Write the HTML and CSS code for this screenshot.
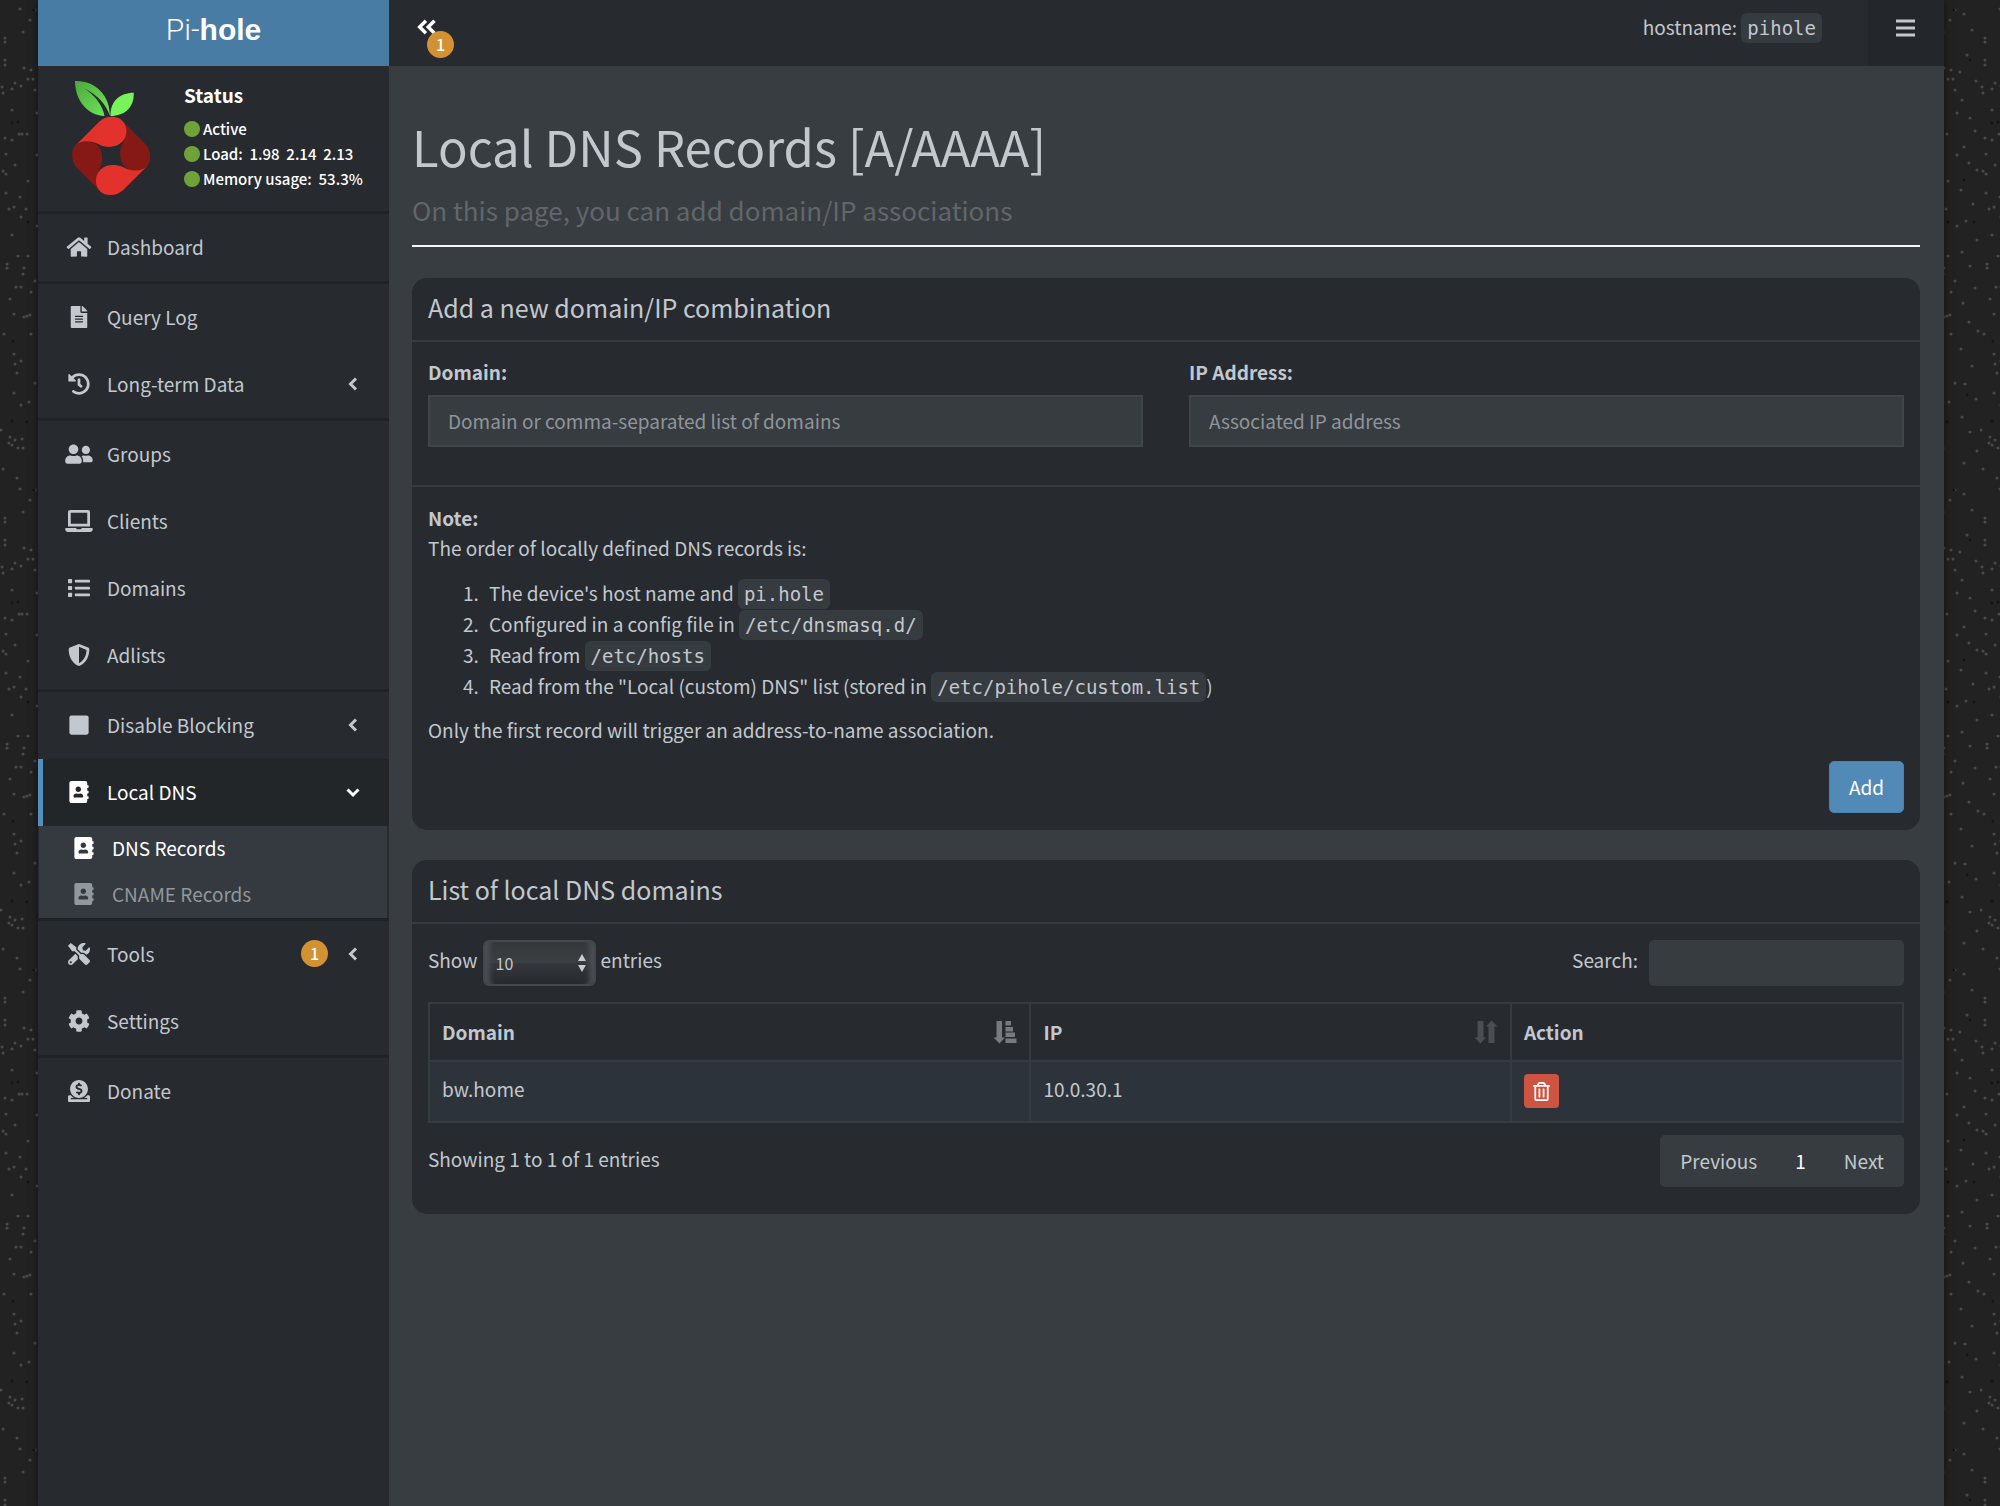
FILE: index.html
```html
<!DOCTYPE html>
<html lang="en">
<head>
<meta charset="utf-8">
<meta name="viewport" content="width=device-width, initial-scale=1">
<title>Pi-hole - Local DNS Records</title>
<link rel="stylesheet" href="styles.css">
</head>
<body>
<svg class="sprite" aria-hidden="true">
  <symbol id="i-home" viewBox="0 0 576 512"><path d="M280.37 148.26L96 300.11V464a16 16 0 0 0 16 16l112.06-.29a16 16 0 0 0 15.92-16V368a16 16 0 0 1 16-16h64a16 16 0 0 1 16 16v95.64a16 16 0 0 0 16 16.05L464 480a16 16 0 0 0 16-16V300L295.67 148.26a12.19 12.19 0 0 0-15.3 0zM571.6 251.47L488 182.56V44.05a12 12 0 0 0-12-12h-56a12 12 0 0 0-12 12v72.61L318.47 43a48 48 0 0 0-61 0L4.34 251.47a12 12 0 0 0-1.6 16.9l25.5 31A12 12 0 0 0 45.15 301l235.22-193.74a12.19 12.19 0 0 1 15.3 0L530.9 301a12 12 0 0 0 16.9-1.6l25.5-31a12 12 0 0 0-1.7-16.93z"/></symbol>
  <symbol id="i-file" viewBox="0 0 384 512"><path d="M224 136V0H24C10.7 0 0 10.7 0 24v464c0 13.3 10.7 24 24 24h336c13.3 0 24-10.7 24-24V160H248c-13.2 0-24-10.8-24-24zm64 236c0 6.6-5.4 12-12 12H108c-6.6 0-12-5.4-12-12v-8c0-6.6 5.4-12 12-12h168c6.6 0 12 5.4 12 12v8zm0-64c0 6.6-5.4 12-12 12H108c-6.6 0-12-5.4-12-12v-8c0-6.6 5.4-12 12-12h168c6.6 0 12 5.4 12 12v8zm0-72v8c0 6.6-5.4 12-12 12H108c-6.6 0-12-5.4-12-12v-8c0-6.6 5.4-12 12-12h168c6.6 0 12 5.4 12 12zm96-114.1v6.1H256V0h6.1c6.4 0 12.5 2.5 17 7l97.9 98c4.5 4.5 7 10.6 7 16.9z"/></symbol>
  <symbol id="i-history" viewBox="0 0 512 512"><path d="M504 255.531c.253 136.64-111.18 248.372-247.82 248.468-59.015.042-113.223-20.53-155.822-54.911-11.077-8.94-11.905-25.541-1.839-35.607l11.267-11.267c8.609-8.609 22.353-9.551 31.891-1.984C173.062 425.135 212.781 440 256 440c101.705 0 184-82.311 184-184 0-101.705-82.311-184-184-184-48.814 0-93.149 18.969-126.068 49.932l50.754 50.754c10.08 10.08 2.941 27.314-11.313 27.314H24c-8.837 0-16-7.163-16-16V38.627c0-14.254 17.234-21.393 27.314-11.314l49.372 49.372C129.209 34.136 189.552 8 256 8c136.81 0 247.747 110.78 248 247.531zm-180.912 78.784l9.823-12.63c8.138-10.463 6.253-25.542-4.21-33.679L288 256.349V152c0-13.255-10.745-24-24-24h-16c-13.255 0-24 10.745-24 24v135.651l65.409 50.874c10.463 8.137 25.541 6.253 33.679-4.21z"/></symbol>
  <symbol id="i-users" viewBox="0 0 640 512"><path d="M192 256c61.9 0 112-50.1 112-112S253.9 32 192 32 80 82.1 80 144s50.1 112 112 112zm76.8 32h-8.3c-20.8 10-43.9 16-68.5 16s-47.6-6-68.5-16h-8.3C51.6 288 0 339.6 0 403.2V432c0 26.5 21.5 48 48 48h288c26.5 0 48-21.5 48-48v-28.8c0-63.6-51.6-115.2-115.2-115.2zM480 256c53 0 96-43 96-96s-43-96-96-96-96 43-96 96 43 96 96 96zm48 32h-3.8c-13.9 4.8-28.6 8-44.2 8s-30.3-3.2-44.2-8H432c-20.4 0-39.2 5.9-55.7 15.4 24.4 26.3 39.7 61.2 39.7 99.8v38.4c0 2.2-.5 4.3-.6 6.4H592c26.5 0 48-21.5 48-48 0-61.9-50.1-112-112-112z"/></symbol>
  <symbol id="i-laptop" viewBox="0 0 640 512"><path d="M624 416H381.54c-.74 19.81-14.71 32-32.74 32H288c-18.69 0-33.02-17.47-32.77-32H16c-8.8 0-16 7.2-16 16v16c0 35.2 28.8 64 64 64h512c35.2 0 64-28.8 64-64v-16c0-8.8-7.2-16-16-16zM576 48c0-26.4-21.6-48-48-48H112C85.6 0 64 21.6 64 48v336h512V48zm-64 272H128V64h384v256z"/></symbol>
  <symbol id="i-list" viewBox="0 0 512 512"><rect y="48" width="96" height="96" rx="16"/><rect y="208" width="96" height="96" rx="16"/><rect y="368" width="96" height="96" rx="16"/><rect x="160" y="64" width="352" height="64" rx="16"/><rect x="160" y="224" width="352" height="64" rx="16"/><rect x="160" y="384" width="352" height="64" rx="16"/></symbol>
  <symbol id="i-shield" viewBox="0 0 512 512"><path d="M466.5 83.7l-192-80a48.15 48.15 0 0 0-36.9 0l-192 80C27.7 91.1 16 108.6 16 128c0 198.5 114.5 335.7 221.5 380.3 11.8 4.9 25.1 4.9 36.9 0C360.1 472.6 496 349.3 496 128c0-19.4-11.7-36.9-29.5-44.3zM256.1 446.3l-.1-381 175.9 73.3c-3.3 151.4-82.1 261.1-175.8 307.7z"/></symbol>
  <symbol id="i-stop" viewBox="0 0 448 512"><rect y="32" width="448" height="448" rx="48"/></symbol>
  <symbol id="i-book" viewBox="0 0 448 512"><path d="M436 160c6.6 0 12-5.4 12-12v-40c0-6.6-5.4-12-12-12h-20V48c0-26.5-21.5-48-48-48H48C21.5 0 0 21.5 0 48v416c0 26.5 21.5 48 48 48h320c26.5 0 48-21.5 48-48v-48h20c6.6 0 12-5.4 12-12v-40c0-6.6-5.4-12-12-12h-20v-64h20c6.6 0 12-5.4 12-12v-40c0-6.6-5.4-12-12-12h-20v-64h20zm-228-32c35.3 0 64 28.7 64 64s-28.7 64-64 64-64-28.7-64-64 28.7-64 64-64zm112 236.8c0 10.6-10 19.2-22.4 19.2H118.4C106 384 96 375.4 96 364.8v-19.2c0-31.8 30.1-57.6 67.2-57.6h5c12.3 5.1 25.7 8 39.8 8s27.6-2.9 39.8-8h5c37.1 0 67.2 25.8 67.2 57.6v19.2z"/></symbol>
  <symbol id="i-tools" viewBox="0 0 512 512"><path d="M501.1 395.7L384 278.6c-23.1-23.1-57.6-27.6-85.4-13.9L192 158.1V96L64 0 0 64l96 128h62.1l106.6 106.6c-13.6 27.8-9.2 62.3 13.9 85.4l117.1 117.1c14.6 14.6 38.2 14.6 52.7 0l52.7-52.7c14.5-14.6 14.5-38.2 0-52.7zM331.7 225c28.3 0 54.9 11 74.9 31l19.4 19.4c15.8-6.9 30.8-16.5 43.8-29.5 37.1-37.1 49.7-89.3 37.9-136.7-2.2-9-13.5-12.1-20.1-5.5l-74.4 74.4-67.9-11.3L334 98.9l74.4-74.4c6.6-6.6 3.4-17.9-5.7-20.2-47.4-11.7-99.6.9-136.6 37.9-28.5 28.5-41.9 66.1-41.2 103.6l82.1 82.1c8.1-1.9 16.5-2.9 24.7-2.9zm-103.9 82l-56.7-56.7L18.7 402.8c-25 25-25 65.5 0 90.5s65.5 25 90.5 0l123.6-123.6c-7.6-19.9-9.9-41.6-5-62.7zM64 472c-13.2 0-24-10.8-24-24 0-13.3 10.7-24 24-24s24 10.7 24 24c0 13.2-10.7 24-24 24z"/></symbol>
  <symbol id="i-cog" viewBox="0 0 512 512"><path d="M487.4 315.7l-42.6-24.6c4.3-23.2 4.3-47 0-70.2l42.6-24.6c4.9-2.8 7.1-8.6 5.5-14-11.1-35.6-30-67.8-54.7-94.6-3.8-4.1-10-5.1-14.8-2.3L380.8 110c-17.9-15.4-38.5-27.3-60.8-35.1V25.8c0-5.6-3.9-10.5-9.4-11.7-36.7-8.2-74.3-7.8-109.2 0-5.5 1.2-9.4 6.1-9.4 11.7V75c-22.2 7.9-42.8 19.8-60.8 35.1L88.7 85.5c-4.9-2.8-11-1.9-14.8 2.3-24.7 26.7-43.6 58.9-54.7 94.6-1.7 5.4.6 11.2 5.5 14L67.3 221c-4.3 23.2-4.3 47 0 70.2l-42.6 24.6c-4.9 2.8-7.1 8.6-5.5 14 11.1 35.6 30 67.8 54.7 94.6 3.8 4.1 10 5.1 14.8 2.3l42.6-24.6c17.9 15.4 38.5 27.3 60.8 35.1v49.2c0 5.6 3.9 10.5 9.4 11.7 36.7 8.2 74.3 7.8 109.2 0 5.5-1.2 9.4-6.1 9.4-11.7v-49.2c22.2-7.9 42.8-19.8 60.8-35.1l42.6 24.6c4.9 2.8 11 1.9 14.8-2.3 24.7-26.7 43.6-58.9 54.7-94.6 1.5-5.5-.7-11.3-5.6-14.1zM256 336c-44.1 0-80-35.9-80-80s35.9-80 80-80 80 35.9 80 80-35.9 80-80 80z"/></symbol>
  <symbol id="i-donate" viewBox="0 0 512 512"><path d="M256 416c114.9 0 208-93.1 208-208S370.9 0 256 0 48 93.1 48 208s93.1 208 208 208zM233.8 97.4V80.6c0-9.2 7.4-16.6 16.6-16.6h11.1c9.2 0 16.6 7.4 16.6 16.6v17c15.5.8 30.5 6.1 43 15.4 5.6 4.1 6.2 12.3 1.2 17.1L306 145.6c-3.8 3.7-9.5 3.8-14 1-5.4-3.4-11.4-5.1-17.8-5.1h-38.9c-9 0-16.3 8.2-16.3 18.3 0 8.2 5 15.5 12.1 17.6l62.3 18.7c25.7 7.7 43.7 32.4 43.7 60.1 0 34-26.4 61.5-59.1 62.4v16.8c0 9.2-7.4 16.6-16.6 16.6h-11.1c-9.2 0-16.6-7.4-16.6-16.6v-17c-15.5-.8-30.5-6.1-43-15.4-5.6-4.1-6.2-12.3-1.2-17.1l16.3-15.5c3.8-3.7 9.5-3.8 14-1 5.4 3.4 11.4 5.1 17.8 5.1h38.9c9 0 16.3-8.2 16.3-18.3 0-8.2-5-15.5-12.1-17.6l-62.3-18.7c-25.7-7.7-43.7-32.4-43.7-60.1.1-34 26.4-61.5 59.1-62.4zM480 352h-32.5c-19.6 26-44.6 47.7-73 64h63.8c5.3 0 9.6 3.6 9.6 8v16c0 4.4-4.3 8-9.6 8H73.6c-5.3 0-9.6-3.6-9.6-8v-16c0-4.4 4.3-8 9.6-8h63.8c-28.4-16.3-53.3-38-73-64H32c-17.7 0-32 14.3-32 32v96c0 17.7 14.3 32 32 32h448c17.7 0 32-14.3 32-32v-96c0-17.7-14.3-32-32-32z"/></symbol>
  <symbol id="i-left" viewBox="0 0 14 14"><path class="line" d="M10 1.500 4.500 7l5.500 5.500"/></symbol>
  <symbol id="i-down" viewBox="0 0 14 14"><path class="line" d="M1.500 4.500 7 10l5.500-5.500"/></symbol>
  <symbol id="i-double-left" viewBox="0 0 18 14"><path class="line" d="M8.500 1.500 3 7l5.500 5.500M16 1.500 10.500 7l5.500 5.500"/></symbol>
  <symbol id="i-bars" viewBox="0 0 19 18"><path d="M0 .5h19v3H0zM0 7.500h19v3H0zM0 14.500h19v3H0z"/></symbol>
  <symbol id="i-trash" viewBox="0 0 448 512"><path d="M268 416h24a12 12 0 0 0 12-12V188a12 12 0 0 0-12-12h-24a12 12 0 0 0-12 12v216a12 12 0 0 0 12 12zM432 80h-82.41l-34-56.7A48 48 0 0 0 274.41 0H173.59a48 48 0 0 0-41.16 23.3L98.41 80H16A16 16 0 0 0 0 96v16a16 16 0 0 0 16 16h16v336a48 48 0 0 0 48 48h288a48 48 0 0 0 48-48V128h16a16 16 0 0 0 16-16V96a16 16 0 0 0-16-16zM171.84 50.91A6 6 0 0 1 177 48h94a6 6 0 0 1 5.15 2.91L293.61 80H154.39zM368 464H80V128h288zm-212-48h24a12 12 0 0 0 12-12V188a12 12 0 0 0-12-12h-24a12 12 0 0 0-12 12v216a12 12 0 0 0 12 12z"/></symbol>
  <symbol id="i-sort-asc" viewBox="0 0 24 24"><path d="M3.500 1h5.500v16.500h3L6.500 23.500.5 17.500h3zM12.500 1h5.500v4.500h-5.500zM12.500 7h7.500v4.500h-7.500zM12.500 12.500h9.500v4.500h-9.500zM12.500 18.500h11v4.500h-11z"/></symbol>
  <symbol id="i-sort" viewBox="0 0 24 24"><path d="M3.500 1h6v16.500h2.500L6.500 23.500.5 17.500h3zM20.500 23h-6V6.500H12L17.500.5l6 6h-3z"/></symbol>
</svg>

<div class="wrapper">
  <aside class="sidebar">
    <a class="brand" href="#"><span class="brand-thin">Pi-</span><b>hole</b></a>
    <div class="user-panel">
      <svg class="logo" viewBox="216 240 238 348" role="img" aria-label="Pi-hole logo">
        <defs>
          <linearGradient id="leaf" x1="0" y1="0" x2="1" y2="1"><stop offset="0" stop-color="#4ba83c"/><stop offset="1" stop-color="#70e85a"/></linearGradient>
          <path id="petal" d="M226 437 297 366C315 347 350 345 367 361C385 379 384 410 366 427C350 443 322 444 302 436C275 421 245 419 226 437Z"/>
        </defs>
        <path fill="url(#leaf)" d="M225 242C286 240 331 285 330 348C322 316 292 282 252 264C290 288 309 320 314 348C262 344 226 302 225 242Z"/>
        <path fill="#79f35a" d="M402 278C404 321 375 348 332 348C330 305 360 278 402 278Z"/>
        <g fill="#861915"><use href="#petal" transform="rotate(90 334 468)"/><use href="#petal" transform="rotate(270 334 468)"/></g>
        <g fill="#e3322b"><use href="#petal"/><use href="#petal" transform="rotate(180 334 468)"/></g>
      </svg>
      <div class="status">
        <p class="status-title">Status</p>
        <p class="status-row"><i class="dot"></i>Active</p>
        <p class="status-row"><i class="dot"></i>Load:&nbsp; 1.98&nbsp; 2.14&nbsp; 2.13</p>
        <p class="status-row"><i class="dot"></i>Memory usage:&nbsp; 53.3%</p>
      </div>
    </div>
    <nav>
      <ul class="menu">
        <li class="sep"><a href="#"><svg class="icon"><use href="#i-home"/></svg><span>Dashboard</span></a></li>
        <li class="sep"><a href="#"><svg class="icon"><use href="#i-file"/></svg><span>Query Log</span></a></li>
        <li><a href="#"><svg class="icon"><use href="#i-history"/></svg><span>Long-term Data</span><svg class="chev"><use href="#i-left"/></svg></a></li>
        <li class="sep"><a href="#"><svg class="icon"><use href="#i-users"/></svg><span>Groups</span></a></li>
        <li><a href="#"><svg class="icon"><use href="#i-laptop"/></svg><span>Clients</span></a></li>
        <li><a href="#"><svg class="icon"><use href="#i-list"/></svg><span>Domains</span></a></li>
        <li><a href="#"><svg class="icon"><use href="#i-shield"/></svg><span>Adlists</span></a></li>
        <li class="sep"><a href="#"><svg class="icon"><use href="#i-stop"/></svg><span>Disable Blocking</span><svg class="chev"><use href="#i-left"/></svg></a></li>
        <li>
          <a class="active" href="#"><svg class="icon"><use href="#i-book"/></svg><span>Local DNS</span><svg class="chev"><use href="#i-down"/></svg></a>
          <ul class="submenu">
            <li><a class="current" href="#"><svg class="icon"><use href="#i-book"/></svg><span>DNS Records</span></a></li>
            <li><a href="#"><svg class="icon"><use href="#i-book"/></svg><span>CNAME Records</span></a></li>
          </ul>
        </li>
        <li class="sep"><a href="#"><svg class="icon"><use href="#i-tools"/></svg><span>Tools</span><span class="badge">1</span><svg class="chev"><use href="#i-left"/></svg></a></li>
        <li><a href="#"><svg class="icon"><use href="#i-cog"/></svg><span>Settings</span></a></li>
        <li class="sep"><a href="#"><svg class="icon"><use href="#i-donate"/></svg><span>Donate</span></a></li>
      </ul>
    </nav>
  </aside>

  <div class="page">
    <header class="topbar">
      <button class="toggle" type="button" aria-label="Toggle navigation"><svg><use href="#i-double-left"/></svg><span class="badge">1</span></button>
      <span class="host">hostname: <code>pihole</code></span>
      <button class="bars" type="button" aria-label="Menu"><svg><use href="#i-bars"/></svg></button>
    </header>

    <main class="content">
      <div class="page-header">
        <h1>Local DNS Records [A/AAAA]</h1>
        <p>On this page, you can add domain/IP associations</p>
      </div>

      <section class="box">
        <h2>Add a new domain/IP combination</h2>
        <div class="fields">
          <div class="field"><label for="domain">Domain:</label><input id="domain" type="text" placeholder="Domain or comma-separated list of domains"></div>
          <div class="field"><label for="ip">IP Address:</label><input id="ip" type="text" placeholder="Associated IP address"></div>
        </div>
        <div class="note">
          <strong>Note:</strong>
          <p>The order of locally defined DNS records is:</p>
          <ol>
            <li>The device's host name and <code>pi.hole</code></li>
            <li>Configured in a config file in <code>/etc/dnsmasq.d/</code></li>
            <li>Read from <code>/etc/hosts</code></li>
            <li>Read from the "Local (custom) DNS" list (stored in <code>/etc/pihole/custom.list</code>)</li>
          </ol>
          <p>Only the first record will trigger an address-to-name association.</p>
          <div class="actions"><button class="btn-add" type="button">Add</button></div>
        </div>
      </section>

      <section class="box">
        <h2>List of local DNS domains</h2>
        <div class="list-body">
          <div class="controls">
            <label class="show">Show
              <select><option>10</option><option>25</option><option>50</option><option>100</option></select>
              entries</label>
            <label class="search">Search: <input type="search"></label>
          </div>
          <table>
            <colgroup><col class="c-domain"><col class="c-ip"><col></colgroup>
            <thead><tr>
              <th><div class="th">Domain<svg class="sorted"><use href="#i-sort-asc"/></svg></div></th>
              <th><div class="th">IP<svg><use href="#i-sort"/></svg></div></th>
              <th>Action</th>
            </tr></thead>
            <tbody><tr>
              <td>bw.home</td><td>10.0.30.1</td>
              <td><button class="btn-del" type="button" aria-label="Delete"><svg><use href="#i-trash"/></svg></button></td>
            </tr></tbody>
          </table>
          <div class="footer">
            <span>Showing 1 to 1 of 1 entries</span>
            <nav class="pager"><a href="#">Previous</a><a class="on" href="#">1</a><a href="#">Next</a></nav>
          </div>
        </div>
      </section>
    </main>
  </div>
</div>
</body>
</html>
```
FILE: styles.css
```css
:root {
  --panel: #272b30;
  --page: #383d41;
  --text: #c2c8ce;
  --line: #363b3f;
  --mono: "DejaVu Sans Mono", "Liberation Mono", monospace;
}

* { box-sizing: border-box; }

body {
  margin: 0;
  padding: 0 56px 0 38px;
  color: var(--text);
  font: 19px/30px "Noto Sans CJK SC", "Open Sans", sans-serif;
  background: #222 url("data:image/svg+xml,%3Csvg xmlns='http://www.w3.org/2000/svg' width='60' height='480' fill='none' stroke-width='3' stroke-linecap='round'%3E%3Cpath stroke='%234a4a4a' d='M20 9h0M35 10h0M30 20h0M23 32h0M5 38h0M5 42h0M5 60h0M5 65h0M24 68h0M31 70h0M28 79h0M33 79h0M15 83h0M21 86h0M12 89h0M3 93h0M35 90h0M2 87h0M12 110h0M37 113h0M19 134h0M22 134h0M27 134h0M5 138h0M12 140h0M37 155h0M6 154h0M15 165h0M3 171h0M6 174h0M28 181h0M20 197h0M6 193h0M26 209h0M9 209h0M14 207h0M21 217h0M37 226h0M12 235h0M18 256h0M28 256h0M7 264h0M7 268h0M24 268h0M23 274h0M35 281h0M16 287h0M21 287h0M31 292h0M10 299h0M14 314h0M24 317h0M27 316h0M30 315h0M4 334h0M31 334h0M14 354h0M21 361h0M15 364h0M17 373h0M35 383h0M14 393h0M29 402h0M21 405h0M1 430h0M10 437h0M15 440h0M22 439h0M9 443h0M12 445h0M18 448h0M23 448h0M3 469h0M17 478h0M44 14h0M52 30h0M47 55h0M40 72h0M56 81h0M42 100h0M50 118h0M55 131h0M44 147h0M49 163h0M57 170h0M41 190h0M53 204h0M46 221h0M57 240h0M42 252h0M50 266h0M55 288h0M43 303h0M49 322h0M58 331h0M41 349h0M52 366h0M45 384h0M56 399h0M42 417h0M50 432h0M57 451h0M44 463h0'/%3E%3Cpath stroke='%23141414' d='M18 122h0M12 123h0M34 10h0M28 222h0M13 341h0M12 421h0M27 422h0M50 60h0M44 180h0M54 222h0M47 395h0'/%3E%3C/svg%3E");
}

a { color: inherit; text-decoration: none; }
button, input, select { font: inherit; color: inherit; }
button { padding: 0; border: 0; background: none; cursor: pointer; }
p, h1, h2, ul, ol { margin: 0; padding: 0; font-weight: 400; }
svg { display: block; fill: currentColor; }
.line { fill: none; stroke: currentColor; stroke-width: 3; }
.sprite { display: none; }

code {
  padding: 4px 6px;
  border-radius: 6px;
  background: #363b40;
  font: 19px/22px var(--mono);
}

.wrapper {
  display: flex;
  min-height: 100vh;
  background: var(--page);
  box-shadow: 0 0 8px rgba(0, 0, 0, .5);
}

.badge {
  width: 27px;
  height: 27px;
  border-radius: 50%;
  background: #d29133;
  color: #fff;
  font-size: 16px;
  line-height: 26px;
  font-weight: 500;
  text-align: center;
}

/* Sidebar */
.sidebar { flex: 0 0 351px; background: var(--panel); }

.brand {
  display: flex;
  align-items: center;
  justify-content: center;
  height: 66px;
  padding-bottom: 6px;
  background: #497ca5;
  color: #fff;
  font: 30px/58px "Liberation Sans", sans-serif;
}
.brand-thin { font-family: Roboto, "Liberation Sans", sans-serif; font-weight: 300; }

.user-panel {
  display: flex;
  gap: 33px;
  height: 145px;
  padding: 14px 20px 0 34px;
  color: #fff;
}
.logo { width: 79px; height: 116px; }
.status-title { line-height: 30px; font-weight: 600; margin-bottom: 6px; }
.status-row {
  display: flex;
  align-items: center;
  gap: 3px;
  font-size: 15px;
  line-height: 25px;
  font-weight: 500;
  white-space: nowrap;
}
.dot { width: 16px; height: 16px; border-radius: 50%; background: #6fa339; }

.menu, .submenu { list-style: none; }
.sep { border-top: 3px solid #1f2327; }
.menu a {
  display: flex;
  align-items: center;
  height: 67px;
  padding: 0 29px 2px 22px;
  border-left: 5px solid transparent;
}
.icon { width: 28px; height: 22px; margin-right: 14px; }
.chev { width: 14px; height: 14px; margin-left: auto; }
.menu .badge { margin-left: auto; }
.menu .badge + .chev { margin-left: 18px; }
.menu .active { border-left-color: #5490be; background: #222629; color: #fff; }
.submenu { margin: 0 2px 0 1px; background: #343a40; }
.menu .submenu a { height: 46px; padding-left: 26px; color: #90979d; }
.menu .submenu .current { color: #fff; }

/* Top bar */
.page { flex: 1; min-width: 0; }
.topbar {
  display: flex;
  align-items: flex-start;
  height: 66px;
  background: var(--panel);
}
.toggle { position: relative; margin: 19px 0 0 27px; color: #fff; }
.toggle svg { width: 21px; height: 16px; }
.toggle .badge { position: absolute; left: 11px; top: 12px; }
.host { margin: 12px 46px 0 auto; }
.bars { width: 76px; height: 66px; padding: 0 0 10px 28px; background: #23272c; }
.bars svg { width: 19px; height: 18px; }

/* Content */
.content { padding: 43px 24px 24px 23px; }
.page-header {
  margin-bottom: 31px;
  padding-bottom: 16px;
  border-bottom: 2px solid #f5f5f5;
}
h1 { margin-bottom: 8px; font-size: 49px; line-height: 74px; }
.page-header p { font-size: 26px; line-height: 38px; color: #62666a; }

.box {
  margin-bottom: 30px;
  border-radius: 15px;
  background: var(--panel);
}
h2 {
  height: 64px;
  padding-left: 16px;
  border-bottom: 2px solid var(--line);
  font-size: 25px;
  line-height: 58px;
}
.fields {
  display: grid;
  grid-template-columns: 1fr 1fr;
  gap: 46px;
  padding: 15px 16px 38px;
}
.field label { display: block; margin-bottom: 8px; font-weight: 700; }
.field input {
  width: 100%;
  height: 52px;
  padding: 0 18px 2px;
  border: 2px solid #40454a;
  background: #373c40;
}
input::placeholder { color: #8f959a; opacity: 1; }

.note { padding: 16px 16px 17px; border-top: 2px solid var(--line); }
.note ol { margin: 14px 0; padding-left: 55px; }
.note ol li { padding-left: 6px; line-height: 31px; }
.actions { display: flex; justify-content: flex-end; margin-top: 16px; }
.btn-add {
  width: 75px;
  height: 52px;
  border: 1px solid #4b83b0;
  border-radius: 5px;
  background: #528ab7;
  color: #fff;
}

.list-body { padding: 16px 16px 27px; }
.controls { display: flex; justify-content: space-between; line-height: 40px; }
.controls label { display: flex; align-items: flex-start; gap: 5px; }
.controls .search { gap: 11px; }
.show select {
  width: 113px;
  height: 46px;
  padding: 0 11px;
  border: 2px solid #44484c;
  border-radius: 6px;
  appearance: none;
  font-size: 16px;
  background:
    url("data:image/svg+xml,%3Csvg xmlns='http://www.w3.org/2000/svg' width='8' height='18' fill='%23c8cdd2'%3E%3Cpath d='M0 7 4 0l4 7zM0 11h8l-4 7z'/%3E%3C/svg%3E") no-repeat right 8px center,
    linear-gradient(#34383b, #3a3f42 50%, #34383c 51%, #26292e);
  box-shadow: inset 9px 0 5px -4px #4a4e52, inset -9px 0 5px -4px #4a4e52;
}
.search input {
  width: 255px;
  height: 46px;
  padding: 0 12px;
  border: 0;
  border-radius: 5px;
  background: #373c40;
}

table {
  width: 100%;
  margin-top: 16px;
  border-collapse: collapse;
  table-layout: fixed;
}
.c-domain { width: 40.8%; }
.c-ip { width: 32.6%; }
th, td { padding: 0 12px; border: 2px solid var(--line); text-align: left; }
th { height: 58px; }
td { height: 61px; padding-top: 12px; vertical-align: top; background: #2d333a; }
.th { display: flex; align-items: center; justify-content: space-between; }
.th svg { width: 24px; height: 24px; color: #4b4f54; }
.th .sorted { color: #777b80; }
.btn-del {
  display: flex;
  align-items: center;
  justify-content: center;
  width: 35px;
  height: 34px;
  border-radius: 4px;
  background: #cd5440;
  color: #fff;
}
.btn-del svg { width: 17px; height: 19px; }

.footer { display: flex; justify-content: space-between; padding-top: 12px; }
.footer > span { line-height: 48px; }
.pager { display: flex; height: 52px; padding: 0 1px; border-radius: 5px; background: #373c40; }
.pager a { padding: 0 19px; line-height: 51px; }
.pager .on { color: #fff; }
```
